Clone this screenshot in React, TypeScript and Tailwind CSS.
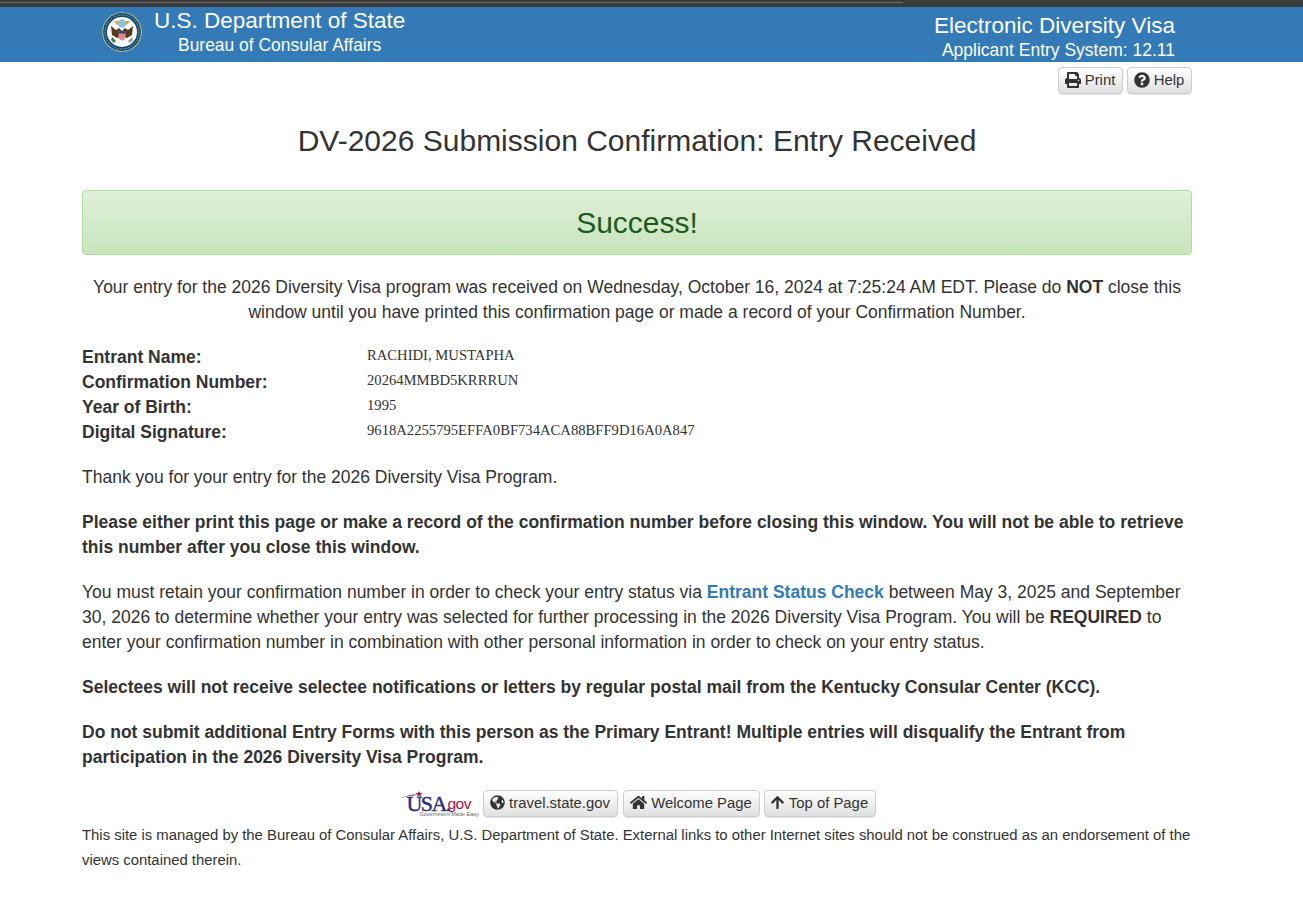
import { FaPrint, FaQuestionCircle, FaGlobeAmericas, FaHome, FaArrowUp } from "react-icons/fa";
import type { ReactNode } from "react";

function Btn({ icon, label, cls }: { icon: ReactNode; label: string; cls: string }) {
  return (
    <a className={`flex items-center justify-center gap-[4px] h-[27px] rounded-[4px] border border-[#ccc] bg-gradient-to-b from-white to-[#e0e0e0] text-[14.875px] text-[#333] shadow-[0_1px_1px_rgba(0,0,0,0.1)] ${cls}`}>
      {icon}
      <span>{label}</span>
    </a>
  );
}

function Seal() {
  return (
    <svg width="40" height="40" viewBox="0 0 40 40" className="shrink-0">
      <circle cx="20" cy="20" r="19.8" fill="#c9c48a" />
      <circle cx="20" cy="20" r="18.9" fill="#0f4a6e" />
      <circle cx="20" cy="20" r="15" fill="#ffffff" />
      <circle cx="20" cy="11.5" r="4.2" fill="#8cc3e0" />
      <path d="M12 9 L15 13 L17 12 L16 9 Z M28 9 L25 13 L23 12 L24 9 Z" fill="#c9b24a" />
      <path d="M9 14 L14 18 L17 16 L20 19 L23 16 L26 18 L31 14 L30 23 L25 26 L20 24 L15 26 L10 23 Z" fill="#5a3a1e" />
      <path d="M16.5 19 H23.5 V26 Q20 31 16.5 26 Z" fill="#e08a90" />
      <rect x="16.5" y="19" width="7" height="2.6" fill="#2a4a8a" />
      <path d="M10 25 L14 29 L12 31 L9 28 Z" fill="#3d7a3d" />
      <path d="M30 25 L26 29 L28 31 L31 28 Z" fill="#a0a0a0" />
      <circle cx="20" cy="20" r="17" fill="none" stroke="#8fb0c4" strokeWidth="1" strokeDasharray="1.5 1.2" />
    </svg>
  );
}

function UsaGov() {
  return (
    <div className="relative w-[81px] h-[27px] shrink-0 font-['Liberation_Serif',serif]">
      <svg width="81" height="27" viewBox="0 0 81 27" className="absolute left-0 top-0">
        <path d="M0 9 Q9 4 19 4.5 L15 5.6 Q8 5.6 0 9 Z" fill="#2b2a72" />
        <path d="M20 1 L21 3 L23.5 3.2 L21.6 4.6 L22.3 7 L20 5.6 L18 7 L18.6 4.6 L16.6 3.2 L19 3 Z" fill="#b5163c" />
      </svg>
      <span className="absolute left-[8px] top-[3px] text-[22px] leading-[22px] text-[#2b2a72] tracking-[-1.6px] [-webkit-text-stroke:0.4px_#2b2a72]">USA.</span>
      <span className="absolute left-[49px] top-[4px] text-[15.5px] leading-[20px] text-[#a3123e] font-['Liberation_Sans',sans-serif] tracking-[-0.5px]">gov</span>
      <span className="absolute left-[21px] top-[22px] text-[5.5px] leading-[5px] text-[#666] whitespace-nowrap font-['Liberation_Sans',sans-serif]">Government Made Easy</span>
    </div>
  );
}

export default function App() {
  return (
    <div className="w-[1303px] h-[907px] overflow-hidden bg-white font-['Liberation_Sans',Arial,sans-serif] text-[#333]">
      <div className="h-[7px] bg-[#3a3a3a] relative">
        <div className="absolute left-0 top-[2px] h-[1px] w-[903px] bg-[#6b6b6b]" />
      </div>
      <header className="h-[55px] bg-[#337ab7] text-white flex justify-between pl-[102px] pr-[128px]">
        <div className="flex items-start">
          <div className="pt-[5px]"><Seal /></div>
          <div className="ml-[12px]">
            <div className="text-[22.5px] leading-[28px]">U.S. Department of State</div>
            <div className="text-[17.45px] leading-[22px] pl-[24px] mt-[-1px]">Bureau of Consular Affairs</div>
          </div>
        </div>
        <div className="text-right">
          <div className="text-[22.5px] leading-[26px] mt-[6px]">Electronic Diversity Visa</div>
          <div className="text-[17.5px] leading-[22px] mt-[0px]">Applicant Entry System: 12.11</div>
        </div>
      </header>

      <main className="w-[1110px] ml-[82px]">
        <div className="flex justify-end gap-[4px] pt-[5px]">
          <Btn icon={<FaPrint size={16} className="mb-[2px]" />} label="Print" cls="w-[65px] pr-[1px]" />
          <Btn icon={<FaQuestionCircle size={16} className="mb-[2px]" />} label="Help" cls="w-[65px] pr-[1px]" />
        </div>

        <h1 className="text-[30px] leading-[33px] text-center mt-[30px]">DV-2026 Submission Confirmation: Entry Received</h1>

        <div className="h-[65px] mt-[33px] rounded-[4px] border border-[#b2dba1] bg-gradient-to-b from-[#dff0d8] to-[#c8e5bc] flex items-center justify-center text-[30px] text-[#1d5a1d]">
          Success!
        </div>

        <p className="text-[17.5px] leading-[25px] text-center mt-[20px]">
          Your entry for the 2026 Diversity Visa program was received on Wednesday, October 16, 2024 at 7:25:24 AM EDT. Please do <b>NOT</b> close this window until you have printed this confirmation page or made a record of your Confirmation Number.
        </p>

        <dl className="mt-[20px] grid grid-cols-[285px_1fr] text-[17.5px] leading-[25px]">
          {[
            ["Entrant Name:", "RACHIDI, MUSTAPHA"],
            ["Confirmation Number:", "20264MMBD5KRRRUN"],
            ["Year of Birth:", "1995"],
            ["Digital Signature:", "9618A2255795EFFA0BF734ACA88BFF9D16A0A847"],
          ].map(([k, v]) => (
            <div key={k} className="contents">
              <dt className="font-bold">{k}</dt>
              <dd className="font-['Liberation_Serif',serif] text-[14.65px] leading-[21px]">{v}</dd>
            </div>
          ))}
        </dl>

        <div className="text-[17.5px] leading-[25px] flex flex-col gap-[20px] mt-[20px]">
          <p>Thank you for your entry for the 2026 Diversity Visa Program.</p>
          <p className="font-bold">Please either print this page or make a record of the confirmation number before closing this window. You will not be able to retrieve this number after you close this window.</p>
          <p>You must retain your confirmation number in order to check your entry status via <a className="font-bold text-[#337ab7]">Entrant Status Check</a> between May 3, 2025 and September 30, 2026 to determine whether your entry was selected for further processing in the 2026 Diversity Visa Program. You will be <b>REQUIRED</b> to enter your confirmation number in combination with other personal information in order to check on your entry status.</p>
          <p className="font-bold">Selectees will not receive selectee notifications or letters by regular postal mail from the Kentucky Consular Center (KCC).</p>
          <p className="font-bold">Do not submit additional Entry Forms with this person as the Primary Entrant! Multiple entries will disqualify the Entrant from participation in the 2026 Diversity Visa Program.</p>
        </div>

        <div className="flex items-center justify-center mt-[20px]">
          <UsaGov />
          <Btn icon={<FaGlobeAmericas size={15} className="mb-[2px]" />} label="travel.state.gov" cls="ml-[3px] w-[135px]" />
          <Btn icon={<FaHome size={17} className="mb-[2px]" />} label="Welcome Page" cls="ml-[5px] w-[137px]" />
          <Btn icon={<FaArrowUp size={15} className="mb-[2px]" />} label="Top of Page" cls="ml-[4px] w-[112px] pr-[1px]" />
        </div>

        <p className="text-[14.875px] leading-[25px] mt-[6px]">
          This site is managed by the Bureau of Consular Affairs, U.S. Department of State. External links to other Internet sites should not be construed as an endorsement of the views contained therein.
        </p>
      </main>
    </div>
  );
}
